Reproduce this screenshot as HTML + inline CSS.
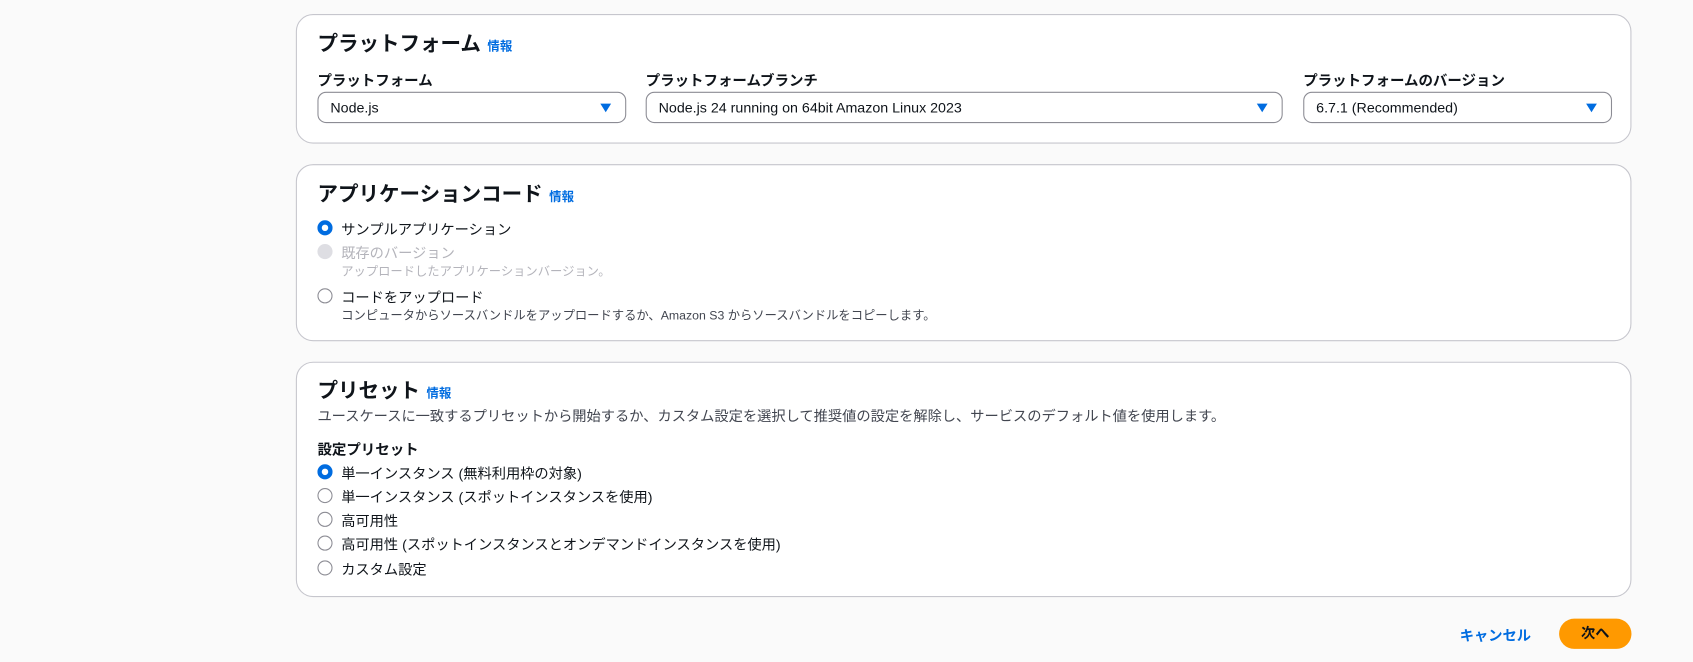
<!DOCTYPE html><html><head><meta charset="utf-8"><style>
body{margin:0;background:#fafafa;font-family:"Liberation Sans","Noto Sans CJK JP",sans-serif;color:#0f141a;width:1693px;height:662px;overflow:hidden;position:relative}
#w{position:absolute;left:0;top:0;width:1568px;height:613px;transform:scale(1.07972);transform-origin:0 0}
.card{position:absolute;left:274px;width:1237px;background:#fff;border:1px solid #c6c6cd;border-radius:16px;box-sizing:border-box}
.t{position:absolute;left:19px;font-size:19px;font-weight:bold;white-space:nowrap}
.t a{font-size:11.5px;color:#006ce0;margin-left:6px;font-weight:bold}
.lb{position:absolute;font-size:13.4px;font-weight:bold;white-space:nowrap}
.sel{position:absolute;top:71px;height:29px;border:1px solid #8c8c94;border-radius:8px;box-sizing:border-box;font-size:13.2px;line-height:27px;padding-left:11px}
.sel:after{content:"";position:absolute;right:13px;top:10px;border-left:5px solid transparent;border-right:5px solid transparent;border-top:8px solid #006ce0}
.r{position:absolute;left:19px;font-size:13.2px;white-space:nowrap}
.r i{position:absolute;left:0;top:2px;width:14px;height:14px;border:1.5px solid #8c8c94;border-radius:50%;box-sizing:border-box}
.r i.on{border:4px solid #006ce0}
.r i.dis{border:none;background:#dedee3}
.r span{position:absolute;left:22px;top:0}
.r small{position:absolute;left:22px;top:19px;font-size:11.4px;color:#424650}
</style></head><body><div id="w">
<div class="card" style="top:13px;height:120px">
<div class="t" style="top:12px">プラットフォーム<a>情報</a></div>
<div class="lb" style="left:19px;top:49px">プラットフォーム</div>
<div class="lb" style="left:323px;top:49px">プラットフォームブランチ</div>
<div class="lb" style="left:932px;top:49px">プラットフォームのバージョン</div>
<div class="sel" style="left:19px;width:286px">Node.js</div>
<div class="sel" style="left:323px;width:590px">Node.js 24 running on 64bit Amazon Linux 2023</div>
<div class="sel" style="left:932px;width:286px">6.7.1 (Recommended)</div>
</div>
<div class="card" style="top:152px;height:164px">
<div class="t" style="top:12px">アプリケーションコード<a>情報</a></div>
<div class="r" style="top:49px"><i class="on"></i><span>サンプルアプリケーション</span></div>
<div class="r" style="top:71px;color:#b4b4bb"><i class="dis"></i><span>既存のバージョン</span><small style="color:#b4b4bb">アップロードしたアプリケーションバージョン。</small></div>
<div class="r" style="top:112px"><i></i><span>コードをアップロード</span><small>コンピュータからソースバンドルをアップロードするか、Amazon S3 からソースバンドルをコピーします。</small></div>
</div>
<div class="card" style="top:335px;height:218px">
<div class="t" style="top:11px">プリセット<a>情報</a></div>
<div style="position:absolute;left:19px;top:39px;font-size:13.2px;color:#424650;white-space:nowrap">ユースケースに一致するプリセットから開始するか、カスタム設定を選択して推奨値の設定を解除し、サービスのデフォルト値を使用します。</div>
<div class="lb" style="left:19px;top:69px">設定プリセット</div>
<div class="r" style="top:92px"><i class="on"></i><span>単一インスタンス (無料利用枠の対象)</span></div>
<div class="r" style="top:114px"><i></i><span>単一インスタンス (スポットインスタンスを使用)</span></div>
<div class="r" style="top:136px"><i></i><span>高可用性</span></div>
<div class="r" style="top:158px"><i></i><span>高可用性 (スポットインスタンスとオンデマンドインスタンスを使用)</span></div>
<div class="r" style="top:181px"><i></i><span>カスタム設定</span></div>
</div>
<div style="position:absolute;left:1352px;top:578px;font-size:13.2px;font-weight:bold;color:#006ce0">キャンセル</div>
<div style="position:absolute;left:1444px;top:573px;width:67px;height:28px;border-radius:14px;background:#ff9900;font-size:13.2px;font-weight:bold;text-align:center;line-height:28px">次へ</div>
</div></body></html>
